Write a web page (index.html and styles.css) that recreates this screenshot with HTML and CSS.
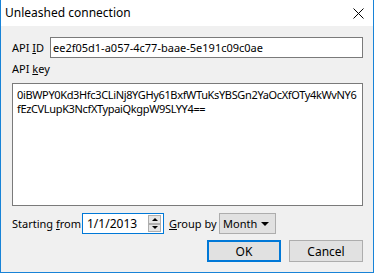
FILE: index.html
```html
<!DOCTYPE html>
<html lang="en">
<head>
    <meta charset="UTF-8">
    <title>Unleashed connection</title>
    <link rel="stylesheet" href="styles.css">
</head>
<body>
    <div class="window">
        <div class="titlebar">
            <span class="title">Unleashed connection</span>
            <svg class="close" width="11" height="11" viewBox="0 0 11 11">
                <path d="M0.5 0.5 L10.5 10.5 M10.5 0.5 L0.5 10.5" stroke="#000" stroke-width="1" fill="none"/>
            </svg>
        </div>
        <div class="content">
            <div class="row">
                <label class="label-id">API <u>I</u>D</label>
                <input class="textbox" type="text" value="ee2f05d1-a057-4c77-baae-5e191c09c0ae">
            </div>
            <label class="label-key">API <u>k</u>ey</label>
            <textarea class="keybox">0iBWPY0Kd3Hfc3CLiNj8YGHy61BxfWTuKsYBSGn2YaOcXfOTy4kWvNY6
fEzCVLupK3NcfXTypaiQkgpW9SLYY4==</textarea>
            <div class="row options">
                <label class="label-from">Starting <u>f</u>rom</label>
                <div class="datebox">
                    <span class="date">1/1/2013</span>
                    <div class="spin">
                        <div class="spin-btn"><span class="arrow-up"></span></div>
                        <div class="spin-btn"><span class="arrow-down"></span></div>
                    </div>
                </div>
                <label class="label-group"><u>G</u>roup by</label>
                <div class="combo">
                    <span>Month</span>
                    <span class="combo-arrow"></span>
                </div>
            </div>
            <div class="buttons">
                <button class="btn btn-default">OK</button>
                <button class="btn">Cancel</button>
            </div>
        </div>
    </div>
</body>
</html>
```

FILE: styles.css
```css
* {
    box-sizing: border-box;
}
body {
    margin: 0;
    font-family: "Noto Sans", "Open Sans", sans-serif;
    font-size: 11px;
    color: #000;
}
.window {
    width: 374px;
    height: 273px;
    display: flex;
    flex-direction: column;
    border: 1px solid #1883d7;
    border-top: none;
}
.titlebar {
    height: 26px;
    background-color: #ffffff;
    display: flex;
    align-items: center;
    justify-content: space-between;
    padding: 0 9px 0 4px;
}
.title {
    font-size: 12px;
    color: #000;
    margin-top: -1px;
}
.close {
    display: block;
}
.content {
    flex: 1;
    background-color: #f0f0f0;
    padding: 11px 10px 0 11px;
}
.row {
    display: flex;
    align-items: center;
}
label {
    white-space: nowrap;
    flex-shrink: 0;
}
.label-id {
    width: 38px;
}
.textbox {
    flex: 1;
    height: 21px;
    border: 1px solid #7a7a7a;
    font-family: inherit;
    font-size: 11px;
    padding: 0 2px;
    background: #fff;
}
.label-key {
    display: block;
    margin-top: 2px;
    height: 23px;
    line-height: 18px;
}
.keybox {
    display: block;
    width: 351px;
    height: 123px;
    border: 1px solid #7a7a7a;
    font-family: inherit;
    font-size: 11px;
    letter-spacing: -0.35px;
    line-height: 14px;
    padding: 4px 4px;
    resize: none;
    overflow: hidden;
    white-space: pre;
    background: #fff;
}
.options {
    margin-top: 7px;
}
.label-from {
    width: 70px;
}
.datebox {
    width: 82px;
    height: 21px;
    border: 1px solid #0078d7;
    background: #fff;
    display: flex;
    align-items: center;
    justify-content: space-between;
    padding: 0 2px 0 4px;
    flex-shrink: 0;
}
.date {
    font-size: 12px;
}
.spin {
    display: flex;
    flex-direction: column;
    width: 13px;
    height: 17px;
}
.spin-btn {
    flex: 1;
    border: 1px solid #adadad;
    background: #e5e5e5;
    display: flex;
    align-items: center;
    justify-content: center;
}
.arrow-up {
    border-left: 3px solid transparent;
    border-right: 3px solid transparent;
    border-bottom: 3px solid #000;
}
.arrow-down {
    border-left: 3px solid transparent;
    border-right: 3px solid transparent;
    border-top: 3px solid #000;
}
.label-group {
    margin-left: 5px;
    width: 50px;
}
.combo {
    width: 57px;
    height: 21px;
    border: 1px solid #adadad;
    background: #e1e1e1;
    display: flex;
    align-items: center;
    justify-content: space-between;
    padding: 0 6px 0 3px;
    flex-shrink: 0;
}
.combo-arrow {
    border-left: 4px solid transparent;
    border-right: 4px solid transparent;
    border-top: 4px solid #000;
}
.buttons {
    display: flex;
    justify-content: flex-end;
    gap: 8px;
    margin-top: 6px;
}
.btn {
    width: 74px;
    height: 22px;
    border: 1px solid #adadad;
    background: #e1e1e1;
    font-family: inherit;
    font-size: 12px;
    padding: 0;
    color: #000;
}
.btn-default {
    border: 2px solid #0078d7;
}
```
